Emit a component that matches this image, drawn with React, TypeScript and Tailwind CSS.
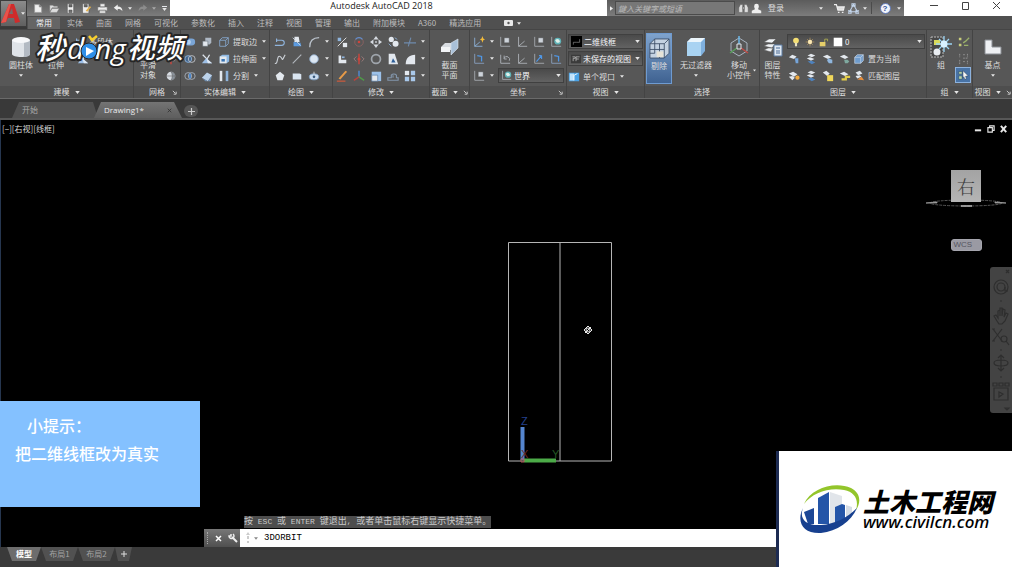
import { useState } from "react";
import type { ReactNode } from "react";

const BLUE = "#8fb4dc";
const PALE = "#e3e8ee";
const GRAY = "#a9adb3";

/** Small ribbon glyphs, all drawn on a 14x14 grid. */
const glyphs = {
  newFile: <path d="M2 2h6l3 3v7H2zM8 2v3h3" fill="#eee" stroke="#999" />,
  open: <path d="M1 11V3h4l1 1h5v2H4zM4 7h9l-3 5H1z" fill="#ddd" stroke="#777" strokeWidth=".5" />,
  save: <path d="M3 1h8v12H3zM5 2v3h4V2zM5 9v3h4V9z" fill="#eee" fillRule="evenodd" stroke="#444" strokeWidth=".6" />,
  saveAs: (
    <>
      <path d="M2 1h8v12H2zM4 2v3h4V2z" fill="#eee" fillRule="evenodd" stroke="#444" strokeWidth=".6" />
      <path d="M6 10l5-6 2 1-5 6z" fill="#e2b04d" />
    </>
  ),
  print: <path d="M4 1h6v4H4zM1 5h12v5H1zM3 9h8v4H3z" fill="#eee" stroke="#666" strokeWidth=".7" />,
  undo: <path d="M1 6l5-4v2.5c4 0 6 2 6 6-1.500-2.500-3-3-6-3V10z" fill="#eee" />,
  redo: <path d="M13 6L8 2v2.500c-4 0-6 2-6 6 1.500-2.500 3-3 6-3V10z" fill="#8c8c8c" />,
  sphere: (
    <>
      <circle cx="7" cy="7" r="5" fill="#d6dbe1" />
      <path d="M7 2a5 5 0 010 10c2-3 2-7 0-10zM2 7h10" fill="#8c949d" stroke="#666" strokeWidth=".7" />
    </>
  ),
  union: (
    <>
      <rect x="1" y="3" width="12" height="8" rx="4" fill="#7aa5d6" />
      <circle cx="5" cy="7" r="3" fill="#b4d0ee" />
    </>
  ),
  subtract: (
    <g fill="none" stroke={BLUE}>
      <circle cx="5" cy="7" r="4" fill="#46688e" />
      <circle cx="9" cy="7" r="4" stroke="#c2c6cc" />
    </g>
  ),
  intersect: (
    <g fill="none" stroke="#aab2bd">
      <circle cx="5" cy="7" r="4" />
      <circle cx="9" cy="7" r="4" />
      <path d="M7 4v6" stroke="#4a8fdc" strokeWidth="2" />
    </g>
  ),
  thicken: (
    <>
      <path d="M5 2h7v6l-2 2H5z" fill="#aeb8c4" />
      <path d="M2 6h6v6H2z" fill={PALE} stroke="#5d6670" strokeWidth=".6" />
    </>
  ),
  slice: (
    <>
      <path d="M2 2l6 6M10 2L7 7" stroke="#dde3ea" strokeWidth="1.500" />
      <path d="M1 12l5-6 7 6z" fill="#9dbfe6" />
      <path d="M6 6l7 6H8z" fill="#dfe9f4" />
    </>
  ),
  interfere: (
    <>
      <path d="M1 9l6-6 6 3-5 7z" fill="#bcd2ea" />
      <path d="M1 9l7 4 5-7-2 7H5z" fill="#6f8fb3" />
    </>
  ),
  extractEdge: (
    <g fill="none" stroke="#86a9cf">
      <path d="M2 5h7v7H2zM5 2h7v7" />
      <path d="M2 5l3-3M9 5l3-3M9 12l3-3" />
    </g>
  ),
  extrudeFace: (
    <>
      <path d="M2 4l3-2h8v8l-3 2H2z" fill="#8fb9e4" />
      <path d="M2 4h8v8H2z" fill={PALE} />
      <path d="M4 7h4v3H4z" fill="#3a76b5" />
    </>
  ),
  split: (
    <>
      <path d="M2 1h3v12H2z" fill={PALE} />
      <path d="M9 1h3v12H9z" fill={BLUE} />
    </>
  ),
  polyline: <path d="M1 11h8a3 3 0 000-6H3M3 3v4" fill="none" stroke={BLUE} strokeWidth="1.300" />,
  helix: (
    <>
      <path d="M4 1h5l1 6H4z" fill={PALE} />
      <path d="M3 7l8 1 1 4H3z" fill="#5c9be0" />
      <path d="M2 2l9 9" stroke="#cfd8e2" />
    </>
  ),
  arc: <path d="M2 13C2 6 6 2 13 2" fill="none" stroke="#b9c1ca" strokeWidth="1.500" />,
  spline: <path d="M1 12C5 14 3 2 7 4s1 8 6-2" fill="none" stroke="#ccd1d7" strokeWidth="1.300" />,
  line: <path d="M2 12L12 2" stroke="#b2b7bd" strokeWidth="1.300" />,
  circle: <circle cx="7" cy="7" r="5" fill="#dce7f3" stroke="#8da9c8" />,
  polygon: <path d="M7 2l5 4-2 6H4L2 6z" fill={PALE} />,
  rect: <path d="M2 4h8l2 1v6H2z" fill="#d9e4f0" />,
  ellipse: (
    <>
      <ellipse cx="7" cy="8" rx="5.500" ry="3.500" fill="#c9dcf0" stroke="#7d9dc0" />
      <circle cx="7" cy="8" r="1.500" fill="#39597c" />
      <path d="M7 2v3" stroke="#ddd" />
    </>
  ),
  move3: (
    <>
      <path d="M2 2h4v4H2z" fill={BLUE} />
      <path d="M2 12L12 2" stroke="#eee" />
      <path d="M8 8h5v5H8z" fill={PALE} />
    </>
  ),
  rotate3: (
    <g fill="none">
      <circle cx="7" cy="7" r="5" stroke="#8f6262" />
      <path d="M3 4a5 5 0 018 0" stroke="#5f8fd0" strokeWidth="1.400" />
      <circle cx="7" cy="7" r="1.500" fill="#d0453c" />
    </g>
  ),
  move: <path d="M7 0l3 4H4zM7 14l3-4H4zM0 7l4-3v6zM14 7l-4-3v6zM6 6h2v2H6z" fill="#d5dae0" />,
  copy: (
    <>
      <circle cx="5" cy="4" r="3" fill={PALE} />
      <circle cx="10" cy="9" r="3.500" fill={PALE} />
      <path d="M2 9l3 3M9 2l3 2" stroke={BLUE} />
    </>
  ),
  trim: <path d="M0 8h14M8 2L5 12" stroke="#6f8bad" strokeWidth="1.300" />,
  align: (
    <>
      <path d="M3 3h3v5h6v4H3z" fill={PALE} />
      <path d="M7 4h3v2H7z" fill={BLUE} />
    </>
  ),
  mirror3: (
    <>
      <path d="M7 1v12" stroke="#d0453c" strokeWidth="1.600" />
      <path d="M4 4L1 7l3 3M10 4l3 3-3 3" fill="none" stroke="#a08080" />
      <circle cx="7" cy="7" r="1.800" fill="#d0453c" />
    </>
  ),
  rotate: <circle cx="7" cy="7" r="5.200" fill="none" stroke="#9fa5ac" strokeWidth="2" />,
  mirror: (
    <>
      <path d="M2 1h7l4 12H2z" fill={PALE} />
      <path d="M5 11l2-5 3 5z" fill="#2e5f99" />
    </>
  ),
  fillet: <path d="M2 13C2 6 6 2 13 2v11z" fill={PALE} />,
  erase: (
    <>
      <path d="M3 10L11 1l2 1-8 9z" fill="#e79b48" />
      <path d="M1 13h10" stroke="#cf5b3c" strokeWidth="1.400" />
    </>
  ),
  axes: (
    <g strokeWidth="1.800" fill="none">
      <path d="M7 8V1" stroke="#4f86cc" />
      <path d="M7 8l-6 4" stroke="#b8443d" />
      <path d="M7 8l6 4" stroke="#4f9a48" />
    </g>
  ),
  scale: (
    <>
      <path d="M2 2h11v11H2z" fill="#9cc1e9" />
      <path d="M2 6h7v7H2z" fill={PALE} stroke="#4a6f98" strokeWidth=".7" />
    </>
  ),
  offset: <path d="M1 12h12V9h-2V6a4 4 0 00-6 0v3H1zM7 9V6" fill="none" stroke="#8397ad" strokeWidth="1.300" />,
  array: (
    <g fill="#a9c8ea">
      <path d="M1 1h5v5H1z" fill={PALE} />
      <path d="M8 1h5v5H8zM1 8h5v5H1zM8 8h5v5H8z" />
    </g>
  ),
  ucs: <path d="M3 1v11h10M3 12l7-6" fill="none" stroke={GRAY} strokeWidth="1.100" />,
  ucsStar: (
    <>
      <path d="M2 2v10h9M2 12l6-5" fill="none" stroke={BLUE} />
      <path d="M11 0l1 3 2 1-2 1-1 3-1-3-2-1 2-1z" fill="#f3bb3a" />
    </>
  ),
  ucsBox: (
    <>
      <path d="M2 1v11h11" fill="none" stroke={GRAY} />
      <path d="M6 2h6v6H6z" fill="#cdd3da" stroke="#444" strokeWidth=".6" />
    </>
  ),
  ucsWorld: (
    <>
      <path d="M2 1v11h11" fill="none" stroke={GRAY} />
      <circle cx="9" cy="6" r="4" fill="#5fb3b8" />
      <path d="M6 5q3-3 5 0t-3 3z" fill="#dff0ea" />
    </>
  ),
  ucsUndo: <path d="M2 2v10h11M6 6a3 3 0 016 3M6 3v4h3" fill="none" stroke="#b2b7bd" />,
  ucsArrow: (
    <>
      <path d="M2 1v11h11" fill="none" stroke={GRAY} />
      <path d="M4 10l6-7m0 0v4m0-4H7" fill="none" stroke="#4f97e6" strokeWidth="1.300" />
    </>
  ),
  ucsBlue: (
    <>
      <path d="M2 1v11h11" fill="none" stroke="#8ba4c2" />
      <path d="M5 3l5 1v6" fill="none" stroke="#4f97e6" strokeWidth="1.500" />
    </>
  ),
  wireframe: (
    <>
      <path d="M0 0h14v14H0z" fill="#000" />
      <path d="M3 11V8h4M7 8h4V4" fill="none" stroke="#999" strokeWidth=".8" />
    </>
  ),
  savedView: (
    <>
      <path d="M0 1h14v12H0z" fill="#3b3b3b" />
      <path d="M2 4h4v2H3v4M7 10V4h5M7 7h4" fill="none" stroke="#c9c9c9" />
    </>
  ),
  viewport: (
    <>
      <path d="M1 2h12v10H1z" fill="#4ba3e6" />
      <path d="M2 3h5v8H2z" fill="#bfe2fb" />
      <path d="M7 11V5l4-2" stroke="#fff" fill="none" />
    </>
  ),
  bulb: (
    <>
      <circle cx="7" cy="5" r="4" fill="#f5df72" />
      <path d="M5.500 8h3v5h-3z" fill="#e7e2c0" />
    </>
  ),
  sun: (
    <>
      <path d="M7 1v12M1 7h12M3 3l8 8M11 3l-8 8" stroke="#b99a5f" />
      <circle cx="7" cy="7" r="3" fill="#fbe9b5" />
    </>
  ),
  lock: (
    <>
      <path d="M1 7h8v6H1z" fill="#e6cf6a" />
      <path d="M8 7V3h4v3" fill="none" stroke="#aeb04f" strokeWidth="1.200" />
    </>
  ),
  swatch: <path d="M1 1h12v12H1z" fill="#fff" />,
  layerPlain: (
    <>
      <path d="M1 5l4-3 5 2-3 3z" fill={PALE} />
      <path d="M8 6h4v6H9z" fill="#76a5da" />
    </>
  ),
  layerStack: (
    <>
      <path d="M3 3l4-2 5 2-4 2zM2 6l4-1 5 2-4 2z" fill={PALE} />
      <path d="M3 10l5-1 4 2-4 2z" fill="#4e82bd" />
    </>
  ),
  layerFreeze: (
    <>
      <path d="M1 4l5-2 5 3-4 2z" fill={PALE} />
      <path d="M7 6l5 2v4H8l-2-3z" fill="#8fb6de" />
    </>
  ),
  layerKey: (
    <>
      <path d="M1 4l5-2 5 3-4 2z" fill={PALE} />
      <path d="M6 8h4l2 2-2 2H7z" fill="#7fa9a0" />
    </>
  ),
  layerCube: <path d="M2 5l3-3h7v7l-3 3H2zM2 5h7v7M9 5l3-3" fill="#6f9ccd" stroke="#c9d8e8" strokeWidth=".8" />,
  layerOn: (
    <>
      <path d="M1 4l5-2 5 3-4 3zM1 8l4-1 3 2-3 3z" fill={PALE} />
      <circle cx="11" cy="9" r="2.500" fill="#f0a93f" />
    </>
  ),
  layerSun: (
    <>
      <path d="M1 3l4-2 4 3-3 3z" fill={PALE} />
      <path d="M6 6h7v7H6z" fill="#f0d75b" />
    </>
  ),
  layerUnlock: (
    <>
      <path d="M1 4l5-2 5 3-4 2z" fill={PALE} />
      <path d="M3 11h5V8h5" stroke="#e3cd4a" strokeWidth="2.500" fill="none" />
    </>
  ),
  layerWarm: (
    <>
      <path d="M3 3l5-2 3 3-5 2zM3 7l5-1 2 2-5 2z" fill={PALE} />
      <path d="M5 11l5-3 3 4z" fill="#e98f3c" />
    </>
  ),
  ungroup: (
    <>
      <path d="M1 2h3v3H1zM1 9h3v3H1z" fill="#c8cc7b" />
      <path d="M6 8l3-2 4-4M7 11h5" stroke="#9ab06a" fill="none" strokeWidth="1.500" />
    </>
  ),
  groupEdit: <path d="M2 1v4M2 8v5M6 2h3M11 1v4M6 10h3M11 9v4M6 6h6" stroke="#9a9a9a" strokeDasharray="2 1" />,
  groupPick: (
    <>
      <path d="M2 3h4v3H2zM2 8h4v4H2z" fill="#b7d4a8" stroke="#1c3d66" strokeWidth=".6" />
      <path d="M7 2l6 6-3 .5 1 3-2 .5-1-3-1 1z" fill="#f5f5f5" stroke="#234" strokeWidth=".5" />
    </>
  ),
  binoculars: <path d="M1 12V6l2-4h3v10zM13 12V6l-2-4H8v10zM6 5h2v3H6z" fill="#ddd" stroke="#555" strokeWidth=".6" />,
  person: <path d="M7 1a3 3 0 013 3c0 2-1 3-1 4l4 2v3H1v-3l4-2c0-1-1-2-1-4a3 3 0 013-3z" fill="#eee" />,
  cart: <path d="M0 2h3l1 3h9l-1 4H5L3 2M5 12h2M10 12h2" fill="#ddd" stroke="#eee" strokeWidth="1.500" />,
  exchange: <path d="M7 2L2 11h10zM5 1h4v3H5zM0 10h4v3H0zM10 10h4v3h-4z" fill="none" stroke="#c2d4ea" strokeWidth="1.300" />,
};

type GlyphName = keyof typeof glyphs;

function Glyph({ name, className = "size-3" }: { name: GlyphName; className?: string }) {
  return (
    <svg viewBox="0 0 14 14" fill="none" aria-hidden="true" className={`shrink-0 ${className}`}>
      {glyphs[name]}
    </svg>
  );
}

function Caret({ className = "w-[5px]" }: { className?: string }) {
  return (
    <svg viewBox="0 0 6 4" aria-hidden="true" className={`h-[3px] shrink-0 ${className}`}>
      <path d="M0 0h6L3 4z" fill="#e6e6e6" />
    </svg>
  );
}

function Launcher() {
  return (
    <svg viewBox="0 0 6 6" aria-hidden="true" className="size-[5px] shrink-0">
      <path d="M1 1l3 3M5 2v3H2" stroke="#ddd" fill="none" />
    </svg>
  );
}

function ToolButton({ name }: { name: GlyphName }) {
  return (
    <button type="button" aria-label={name} className="flex h-[17px] w-[17px] shrink-0 items-center justify-center">
      <Glyph name={name} />
    </button>
  );
}

function MoreButton() {
  return (
    <button type="button" aria-label="更多" className="flex h-[17px] w-[9px] shrink-0 items-center justify-center">
      <Caret className="w-1" />
    </button>
  );
}

/** One line of icon buttons; "more" puts a flyout arrow in the line. */
function ToolRow({ items, children }: { items: (GlyphName | "more")[]; children?: ReactNode }) {
  return (
    <div className="flex h-[17px] items-center">
      {items.map((item, i) => (item === "more" ? <MoreButton key={i} /> : <ToolButton key={i} name={item} />))}
      {children}
    </div>
  );
}

function LabelButton({ icon, label, more }: { icon: GlyphName; label: string; more?: boolean }) {
  return (
    <button type="button" className="flex h-[17px] items-center gap-[3px] whitespace-nowrap">
      <Glyph name={icon} />
      {label}
      {more && <Caret className="ml-0.5 w-1" />}
    </button>
  );
}

function BigButton({ lines, more, className = "", children }: { lines: string[]; more?: boolean; className?: string; children: ReactNode }) {
  return (
    <button type="button" className={`flex h-[51px] shrink-0 flex-col items-center pt-px leading-[10px] ${className}`}>
      <span className="flex h-[26px] items-center">{children}</span>
      {lines.map((line) => (
        <span key={line} className="whitespace-nowrap">{line}</span>
      ))}
      {more && <Caret className="mt-1 w-1" />}
    </button>
  );
}

function Combo({ label, icon, options, className = "" }: { label: string; icon?: ReactNode; options: string[]; className?: string }) {
  return (
    <div className={`relative flex h-[15px] items-center gap-0.5 border border-[#404040] bg-gradient-to-b from-[#4a4a4a] to-[#626262] pl-0.5 ${className}`}>
      {icon}
      <select aria-label={label} className="h-full min-w-0 flex-1 appearance-none bg-transparent p-0 text-[8px] text-gray-100 outline-none">
        {options.map((o) => (
          <option key={o}>{o}</option>
        ))}
      </select>
      <Caret className="pointer-events-none absolute top-[5px] right-[2px] w-[5px]" />
    </div>
  );
}

function Panel({ title, width, more, launcher, children }: { title: string; width: string; more?: boolean; launcher?: boolean; children: ReactNode }) {
  return (
    <section className={`relative flex shrink-0 flex-col border-r border-[#444] ${width}`}>
      <div className="flex h-[57px] pt-[3px]">{children}</div>
      <h2 className="flex h-3 items-center justify-center gap-[5px] bg-[#4e4e4e] font-normal whitespace-nowrap">
        {title}
        {more && <Caret />}
        {launcher && (
          <button type="button" aria-label={`${title}设置`} className={more ? "" : "absolute right-[3px]"}>
            <Launcher />
          </button>
        )}
      </h2>
    </section>
  );
}

const MENU = ["常用", "实体", "曲面", "网格", "可视化", "参数化", "插入", "注释", "视图", "管理", "输出", "附加模块", "A360", "精选应用"];

function TitleBar() {
  return (
    <div className="flex h-4 bg-gradient-to-b from-[#5c5c5c] to-[#7c7c7c]">
      <div className="flex w-[143px] items-center pl-[3px]">
        {(["newFile", "open", "save", "saveAs", "print", "undo"] as GlyphName[]).map((n) => (
          <button key={n} type="button" aria-label={n} className="flex w-4 justify-center">
            <Glyph name={n} className="size-[11px]" />
          </button>
        ))}
        <span className="flex w-2 justify-center"><Caret className="w-1" /></span>
        <button type="button" aria-label="redo" className="flex w-4 justify-center">
          <Glyph name="redo" className="size-[11px]" />
        </button>
        <span className="flex w-2 justify-center"><Caret className="w-1 opacity-50" /></span>
        <button type="button" aria-label="自定义" className="flex w-3 flex-col items-center gap-px">
          <span className="h-px w-[5px] bg-gray-200" />
          <Caret />
        </button>
      </div>
      <h1 className="flex-1 bg-white pr-3.5 text-center font-['Open_Sans','Noto_Sans',sans-serif] text-[9px] leading-[12px] text-[#222]">
        Autodesk AutoCAD 2018
      </h1>
      <div className="flex w-[297px] items-center">
        <span className="flex w-2 justify-center">
          <svg viewBox="0 0 4 6" className="h-[5px] w-[3px]"><path d="M0 0l4 3-4 3z" fill="#eee" /></svg>
        </span>
        <input
          type="search"
          aria-label="搜索"
          placeholder="鍵入关键字或短语"
          className="h-[14px] w-[120px] border border-[#4b4b4b] bg-[#777] px-0.5 text-[8px] italic outline-none placeholder:text-[#b9b9b9]"
        />
        <button type="button" aria-label="搜索" className="flex w-4 justify-center"><Glyph name="binoculars" className="size-[11px]" /></button>
        <button type="button" className="flex items-center gap-0.5 whitespace-nowrap">
          <Glyph name="person" className="size-[11px]" />
          <span className="pl-1">登录</span>
        </button>
        <span className="flex flex-1 justify-end pr-2"><Caret className="w-1" /></span>
        <button type="button" aria-label="商店" className="flex w-4 justify-center"><Glyph name="cart" className="size-[11px]" /></button>
        <button type="button" aria-label="应用程序" className="flex w-6 items-center gap-1 pl-px"><Glyph name="exchange" className="size-[11px]" /><Caret className="w-1" /></button>
        <span className="h-3 w-px bg-[#4b4b4b]" />
        <button type="button" aria-label="帮助" className="flex w-8 items-center justify-center gap-1.5 pl-1">
          <span className="flex size-[11px] items-center justify-center rounded-full border border-[#5d76b5] bg-[#f1f4fa] font-['Liberation_Sans',sans-serif] leading-[9px] font-bold text-[#2f4f9c]">
            ?
          </span>
          <Caret className="w-1" />
        </button>
      </div>
      <div className="flex w-[108px] items-start justify-end bg-white pt-px">
        {["M0 4.500h8", "M1.500 1.500h6v7h-6z", "M1 1l7 7M8 1L1 8"].map((d, i) => (
          <button key={d} type="button" aria-label={["最小化", "最大化", "关闭"][i]} className="flex w-[31px] justify-center">
            <svg viewBox="0 0 9 9" className="size-[9px]" fill="none"><path d={d} stroke="#444" /></svg>
          </button>
        ))}
      </div>
    </div>
  );
}

function MenuTabs() {
  const [active, setActive] = useState("常用");
  return (
    <nav className="flex h-[13px] items-end gap-px bg-[#505050] pl-px">
      {MENU.map((item) => (
        <button
          key={item}
          type="button"
          onClick={() => setActive(item)}
          className={
            item === active
              ? "h-3 bg-[#656565] px-2 leading-3 whitespace-nowrap text-gray-100"
              : "h-3 px-1.5 leading-3 whitespace-nowrap text-[#bdbdbd]"
          }
        >
          {item}
        </button>
      ))}
      <button type="button" aria-label="显示选项" className="ml-4 flex h-3 items-center gap-1">
        <svg viewBox="0 0 9 6" className="h-1.5 w-[9px]">
          <rect width="9" height="6" rx="1" fill="#e8e8e8" />
          <circle cx="4.500" cy="3" r="1.200" fill="#555" />
        </svg>
        <Caret className="w-1" />
      </button>
    </nav>
  );
}

function Ribbon() {
  return (
    <div className="flex h-[70px] overflow-hidden border-y border-[#454545] border-b-[#6a6a6a] bg-[#575757] text-[#dedede]">
      <Panel title="建模" width="w-[134px]" more>
        <BigButton lines={["圆柱体"]} more className="ml-1 w-[34px]">
          <svg viewBox="0 0 20 22" className="h-[22px] w-5">
            <path d="M1 4v14c0 4 18 4 18 0V4z" fill="#dfe3e8" />
            <path d="M13 5v16c3 0 6-1 6-3V4z" fill="#b3bac3" />
            <ellipse cx="10" cy="4" rx="9" ry="3" fill="#f7f8fa" />
          </svg>
        </BigButton>
        <BigButton lines={["拉伸"]} more className="w-9">
          <svg viewBox="0 0 20 20" className="size-5"><path d="M3 8l8-4 6 3v9l-8 3-6-3z" fill="#cfd8e2" /></svg>
        </BigButton>
        <div className="flex flex-col">
          <LabelButton icon="polyline" label="多段体" />
          <ToolRow items={["slice"]} />
        </div>
      </Panel>
      <Panel title="网格" width="w-[47px]" launcher>
        <BigButton lines={["平滑", "对象"]} className="w-7">
          <svg viewBox="0 0 20 20" className="size-5"><circle cx="10" cy="10" r="7" fill="#cfd8e2" /></svg>
        </BigButton>
        <div className="flex flex-col">
          <ToolRow items={["sphere"]} />
          <ToolRow items={["mirror3"]} />
          <ToolRow items={["sphere"]} />
        </div>
      </Panel>
      <Panel title="实体编辑" width="w-[89px]" more>
        <div className="flex flex-col">
          <ToolRow items={["union", "thicken"]} />
          <ToolRow items={["subtract", "slice"]} />
          <ToolRow items={["intersect", "interfere"]} />
        </div>
        <div className="flex flex-col items-start pl-[3px]">
          <LabelButton icon="extractEdge" label="提取边" more />
          <LabelButton icon="extrudeFace" label="拉伸面" more />
          <LabelButton icon="split" label="分割" more />
        </div>
      </Panel>
      <Panel title="绘图" width="w-[63px]" more>
        <div className="flex flex-col pl-px">
          <ToolRow items={["polyline", "helix", "arc", "more"]} />
          <ToolRow items={["spline", "line", "circle", "more"]} />
          <ToolRow items={["polygon", "rect", "ellipse", "more"]} />
        </div>
      </Panel>
      <Panel title="修改" width="w-[97px]" more>
        <div className="flex flex-col">
          <ToolRow items={["move3", "rotate3", "move", "copy", "trim", "more"]} />
          <ToolRow items={["align", "mirror3", "rotate", "mirror", "fillet", "more"]} />
          <ToolRow items={["erase", "axes", "scale", "offset", "array", "more"]} />
        </div>
      </Panel>
      <Panel title="截面" width="w-10" more launcher>
        <BigButton lines={["截面", "平面"]} className="w-full">
          <svg viewBox="0 0 20 20" className="size-5">
            <path d="M1 10l4-4h9v7H1z" fill="#d8dce1" />
            <path d="M1 10h9v5H1z" fill="#f2f4f6" />
            <path d="M11 6l7-4v9l-7 7z" fill="#a9c0d8" stroke="#dfe8f1" strokeWidth=".6" />
          </svg>
        </BigButton>
      </Panel>
      <Panel title="坐标" width="w-[97px]" launcher>
        <div className="flex flex-col">
          <ToolRow items={["ucsStar", "more", "ucsBox", "ucs", "ucsBox", "ucsWorld"]} />
          <ToolRow items={["ucsBlue", "more", "ucsUndo", "ucs", "ucsArrow", "ucsBlue"]} />
          <ToolRow items={["ucsBox", "more"]}>
            <Combo label="坐标系" options={["世界"]} icon={<Glyph name="ucsWorld" className="size-[11px]" />} className="ml-0.5 w-[66px]" />
          </ToolRow>
        </div>
      </Panel>
      <Panel title="视图" width="w-[78px]" more>
        <div className="flex flex-1 flex-col gap-0.5 px-px pt-px">
          <Combo label="视觉样式" options={["二维线框", "真实", "概念"]} icon={<Glyph name="wireframe" className="size-[11px]" />} />
          <Combo label="视图" options={["未保存的视图"]} icon={<Glyph name="savedView" className="size-[10px]" />} />
          <LabelButton icon="viewport" label="单个视口" more />
        </div>
      </Panel>
      <Panel title="选择" width="w-[115px]">
        <BigButton lines={["剔除"]} className="ml-px w-[26px] border border-[#6f9bd0] bg-gradient-to-b from-[#7fa3cd] to-[#3f6291]">
          <svg viewBox="0 0 22 22" className="size-[21px]">
            <path d="M1 6l5-5h15v15l-5 5H1z" fill="#c4d2e2" />
            <path d="M1 6h15v15H1zM1 6l5-5h15M16 6l5-5v15l-5 5M6 1v15M11 6v15M6 16H1M1 12h15" stroke="#3a4c66" fill="none" strokeWidth=".9" />
            <path d="M8 14h7v6H8z" fill="#e6e3d8" />
          </svg>
        </BigButton>
        <BigButton lines={["无过滤器"]} more className="w-12">
          <svg viewBox="0 0 20 20" className="size-5">
            <path d="M1 5l4-4h14v13l-4 5H1z" fill="#7fb0de" />
            <path d="M1 5h14v14H1z" fill="#a9d3f2" />
            <path d="M1 5l4-4h14l-4 4z" fill="#ecf6fc" />
          </svg>
        </BigButton>
        <BigButton lines={["移动", "小控件"]} className="relative w-[38px]">
          <svg viewBox="0 0 20 22" className="h-[22px] w-5" fill="none">
            <path d="M10 2l8 5v8l-8 5-8-5V7z" stroke="#a8b3c0" />
            <path d="M10 0v8" stroke="#6bb7e8" strokeWidth="1.500" />
            <path d="M8 12l-7 5" stroke="#57a05a" strokeWidth="1.500" />
            <path d="M12 12l7 5" stroke="#c24b45" strokeWidth="1.500" />
            <path d="M8 8h4v5H8z" stroke="#e0e4ea" />
          </svg>
          <Caret className="absolute right-0.5 bottom-3 w-[3px]" />
        </BigButton>
      </Panel>
      <Panel title="图层" width="w-[167px]" more>
        <BigButton lines={["图层", "特性"]} className="w-[25px]">
          <svg viewBox="0 0 20 20" className="size-5">
            <path d="M1 5l5-3h7l-4 4zM1 9l4-2h7l-3 4zM1 13l4-2h5l-2 4z" fill="#eef1f4" stroke="#555" strokeWidth=".5" />
            <path d="M11 8h8v11h-8z" fill="#dfe8f2" stroke="#5c7da3" />
            <path d="M13 11h4M13 14h4M13 16h4" stroke="#4a6b94" />
          </svg>
        </BigButton>
        <div className="flex flex-1 flex-col">
          <Combo
            label="图层"
            options={["0"]}
            className="my-px ml-0.5 w-[138px]"
            icon={
              <span className="flex items-center gap-1 pl-px">
                <Glyph name="bulb" className="size-[10px]" />
                <Glyph name="sun" className="size-[10px]" />
                <Glyph name="lock" className="size-[10px]" />
                <Glyph name="swatch" className="size-[10px]" />
              </span>
            }
          />
          <ToolRow items={["layerPlain", "layerStack", "layerFreeze", "layerKey"]}>
            <LabelButton icon="layerCube" label="置为当前" />
          </ToolRow>
          <ToolRow items={["layerOn", "layerStack", "layerSun", "layerUnlock"]}>
            <LabelButton icon="layerWarm" label="匹配图层" />
          </ToolRow>
        </div>
      </Panel>
      <Panel title="组" width="w-[46px]" more>
        <BigButton lines={["组"]} className="w-7">
          <svg viewBox="0 0 22 22" className="size-[22px]">
            <path d="M1 1h12v20H1z" fill="#474747" stroke="#bbb" strokeDasharray="2 1" />
            <path d="M4 4h6v5H4z" fill="#d8da5a" />
            <circle cx="7" cy="16" r="3.500" fill="#e9edf1" />
            <path d="M14 0v16M6 8h16M9 3l10 10M19 3L9 13" stroke="#9ad4f5" strokeWidth="1.300" />
            <circle cx="14" cy="8" r="3.500" fill="#d9f1ff" />
          </svg>
        </BigButton>
        <div className="flex flex-col">
          <ToolRow items={["ungroup"]} />
          <ToolRow items={["groupEdit"]} />
          <button type="button" aria-label="组选择" className="flex h-4 w-4 items-center justify-center border border-[#8db2dd] bg-[#4873a6]">
            <Glyph name="groupPick" />
          </button>
        </div>
      </Panel>
      <section className="flex min-w-9 flex-1 flex-col">
        <div className="flex h-[57px] justify-center pt-[3px]">
          <BigButton lines={["基点"]} more className="w-9">
            <svg viewBox="0 0 18 16" className="h-4 w-[18px]">
              <path d="M1 1h7v7h9v7H1z" fill="#eef0f3" stroke="#8b8f95" />
            </svg>
          </BigButton>
        </div>
        <h2 className="flex h-3 items-center justify-center gap-[5px] bg-[#4e4e4e] font-normal whitespace-nowrap">
          视图 <Caret /> <Launcher />
        </h2>
      </section>
    </div>
  );
}

function DrawingTabs() {
  return (
    <div className="flex h-[21px] items-end border-b-2 border-[#575757] bg-[#393939] pl-3">
      <button type="button" className="h-4 w-[86px] bg-[#515151] pl-2.5 text-left text-[#a9a9a9] [clip-path:polygon(7px_0,81px_0,100%_100%,0_100%)]">
        开始
      </button>
      <button type="button" className="-ml-1 flex h-4 w-[88px] items-center justify-between bg-gradient-to-b from-[#747474] to-[#5e5e5e] px-2.5 font-['Open_Sans','Noto_Sans',sans-serif] text-[8px] text-[#ececec] [clip-path:polygon(7px_0,80px_0,100%_100%,0_100%)]">
        Drawing1*
        <svg viewBox="0 0 7 7" className="size-[5px]"><path d="M1 1l5 5M6 1L1 6" stroke="#333" strokeWidth="1.200" /></svg>
      </button>
      <button type="button" aria-label="新图形" className="mb-px ml-0.5 flex h-3 w-3.5 items-center justify-center rounded-md bg-[#555]">
        <svg viewBox="0 0 7 7" className="size-[7px]"><path d="M3.500 0v7M0 3.500h7" stroke="#ccc" strokeWidth="1.200" /></svg>
      </button>
    </div>
  );
}

/** Wireframe model with the UCS icon at its foot and the orbit cursor. */
function Model() {
  return (
    <svg className="absolute inset-0 size-full" fill="none" aria-label="模型">
      <path d="M508.500 122.500h103v218.500h-103zM560 122.500v218.500" stroke="#b5b5b5" />
      <path d="M522.500 307v33" stroke="#5585cf" strokeWidth="4" />
      <path d="M524 340.500h32" stroke="#4cab48" strokeWidth="4" />
      <path d="M521 339h3v3h-3z" stroke="#b05a5a" />
      <g fontFamily="Liberation Sans" fontSize="11">
        <text x="521" y="305" fill="#24408e">Z</text>
        <text x="552" y="338" fill="#235723">Y</text>
        <text x="521" y="338" fill="#6e2a2a">X</text>
      </g>
      <g stroke="#e8e8e8">
        <circle cx="588" cy="210" r="2" />
        <path d="M588 206l4 4-4 4-4-4zM585 213l6-6" />
      </g>
    </svg>
  );
}

function ViewCube() {
  return (
    <div className="absolute top-[50px] right-[5px] flex w-[82px] flex-col items-center">
      <button type="button" className="z-10 h-8 w-[30px] bg-gradient-to-b from-[#a3a3a3] to-[#b5b5b5] font-['Noto_Serif_CJK_SC','Noto_Sans_CJK_SC',serif] text-[18px] leading-8 font-light text-[#3b3b3b]">
        右
      </button>
      <svg viewBox="0 0 82 10" className="-mt-1 h-2.5 w-full" fill="none">
        <ellipse cx="41" cy="5" rx="36" ry="3" stroke="#555" strokeDasharray="3 1" />
        <path d="M1 5l11-1v1zM81 5l-11-1v1z" fill="#bbb" stroke="#999" strokeWidth=".8" />
        <path d="M36 8h11" stroke="#bbb" strokeWidth="1.500" />
      </svg>
      <button type="button" className="mt-[31px] h-3 w-[31px] rounded-[3px] border border-[#a5a5ad] bg-[#9a9aa3] px-0.5 text-left font-['Liberation_Sans',sans-serif] text-[8px] leading-[10px] text-[#55555f]">
        WCS
      </button>
    </div>
  );
}

function NavBar() {
  return (
    <div className="absolute top-[147px] right-0 h-[146px] w-[22px] rounded-l-[3px] bg-[#434343]">
      <svg viewBox="0 0 22 146" className="h-full w-full" fill="none" stroke="#2e2e2e" strokeWidth="1.200">
        <path d="M16 3l3 3M19 3l-3 3" />
        <circle cx="11" cy="20" r="7" />
        <circle cx="11" cy="20" r="4" />
        <path d="M15 20v4h3M10 34h2M10 83h2M10 110h2" />
        <path d="M7 54l-3-5 2-1 2 3v-7l2-1v6-8h2v8l1-7 2 1-1 7 2-4 2 1-3 7-3 3H9z" />
        <path d="M3 62l9 12M3 74l9-12M2 62h3M2 74h3" />
        <circle cx="14" cy="72" r="3" />
        <path d="M16 74l3 4M11 88v16M8 91l3-3 3 3M8 101l3 3 3-3M4 96c0-4 14-4 14 0s-14 4-14 0" />
        <path d="M4 121h14v12H4zM3 116h4v3H3zM9 116h4v3H9zM15 116h4v3h-4zM9 125v5l4-3z" />
        <path d="M15 141h4l-2 2z" />
      </svg>
    </div>
  );
}

function CommandLine() {
  return (
    <div className="absolute right-[236px] bottom-0 left-[204px]">
      <p className="mb-px ml-10 w-fit bg-[#4d4d4d] font-['Liberation_Mono','Noto_Sans_CJK_SC',monospace] text-[8px] leading-[11px] whitespace-nowrap text-[#c9c9c9]">
        <span className="text-[9px]">按</span> ESC <span className="text-[9px]">或</span> ENTER{" "}
        <span className="text-[9px]">键退出</span>, <span className="text-[9px]">或者单击鼠标右键显示快捷菜单。</span>
      </p>
      <div className="flex h-[18px] bg-white">
        <div className="flex w-9 items-center justify-between bg-gradient-to-b from-[#777] to-[#505050] pr-0.5 pl-[3px]">
          <span className="h-3 w-px border-l border-dotted border-[#aaa]" />
          <button type="button" aria-label="关闭">
            <svg viewBox="0 0 7 7" className="size-[7px]"><path d="M1 1l5 5M6 1L1 6" stroke="#fff" strokeWidth="1.500" /></svg>
          </button>
          <button type="button" aria-label="自定义">
            <svg viewBox="0 0 10 10" className="size-2.5" fill="none"><path d="M4 4l5 5" stroke="#eee" strokeWidth="2" /><path d="M3 1v2H1a2.500 2.500 0 104-2" stroke="#eee" strokeWidth="1.500" /></svg>
          </button>
        </div>
        <div className="flex items-center gap-1 px-1.5">
          <svg viewBox="0 0 4 12" className="h-3 w-1"><path d="M0 3l2-3 2 3zM1 4h2v3H1zM1 9h2v2H1z" fill="#ccc" /></svg>
          <svg viewBox="0 0 5 3" className="h-[3px] w-1"><path d="M0 0h5L2.500 3z" fill="#888" /></svg>
        </div>
        <input
          type="text"
          aria-label="命令行"
          defaultValue="3DORBIT"
          className="min-w-0 flex-1 bg-transparent font-['Liberation_Mono',monospace] text-[9px] text-black outline-none"
        />
      </div>
    </div>
  );
}

function Viewport() {
  return (
    <main className="relative min-h-0 flex-1 overflow-hidden bg-black shadow-[inset_1px_0_0_#26364f]">
      <p className="px-0.5 pt-[3px] text-[8px] leading-[11px] text-[#d8d8d8]">[−][右视][线框]</p>
      <div className="absolute top-[5px] right-1 flex gap-[5px]">
        {["M1 6h7", "M1 3h5v5H1zM3 3V1h5v5H6", "M1 1l6 7M7 1L1 8"].map((d, i) => (
          <button key={d} type="button" aria-label={["最小化", "还原", "关闭"][i]}>
            <svg viewBox="0 0 9 9" className="block size-2" fill="none"><path d={d} stroke="#e6e6e6" strokeWidth={i === 1 ? 1.3 : 2.2} /></svg>
          </button>
        ))}
      </div>
      <Model />
      <ViewCube />
      <NavBar />
      <aside className="absolute bottom-10 left-0 h-[106px] w-[200px] bg-[#84c1ff] pt-2.5 pl-[15px] text-[16px] leading-7 font-medium text-white">
        <p className="pl-3">小提示：</p>
        <p>把二维线框改为真实</p>
      </aside>
      <CommandLine />
    </main>
  );
}

function LayoutTabs() {
  return (
    <footer className="flex h-5 items-start bg-[#3a3a3a] pl-[7px] text-[#a3a3a3]">
      <button type="button" className="h-3.5 w-[34px] bg-[#6d6d6d] font-bold text-white [clip-path:polygon(0_0,100%_0,29px_100%,5px_100%)]">模型</button>
      <button type="button" className="h-3.5 w-[37px] bg-[#515151] [clip-path:polygon(0_0,100%_0,32px_100%,5px_100%)]">布局1</button>
      <button type="button" className="h-3.5 w-[37px] bg-[#515151] [clip-path:polygon(0_0,100%_0,32px_100%,5px_100%)]">布局2</button>
      <button type="button" aria-label="新布局" className="flex h-3.5 w-[17px] items-center justify-center bg-[#515151] [clip-path:polygon(0_0,100%_0,14px_100%,3px_100%)]">
        <svg viewBox="0 0 7 7" className="size-1.5"><path d="M3.500 0v7M0 3.500h7" stroke="#ddd" strokeWidth="1.200" /></svg>
      </button>
    </footer>
  );
}

function VideoMark() {
  return (
    <svg viewBox="0 0 156 42" className="pointer-events-none absolute top-[30px] left-8 h-[42px] w-[156px] overflow-visible" aria-label="秒dong视频">
      <g
        fill="#fff"
        stroke="#262626"
        strokeWidth="4"
        strokeLinejoin="round"
        paintOrder="stroke"
        fontStyle="italic"
        fontFamily="Noto Sans CJK SC, sans-serif"
        fontWeight="500"
      >
        <text x="3" y="29" fontSize="30">秒</text>
        <text x="35" y="29" fontSize="30" fontFamily="Open Sans, sans-serif">d</text>
        <text x="63" y="29" fontSize="28" fontFamily="Open Sans, sans-serif">ng</text>
        <text x="95" y="28" fontSize="28">视频</text>
      </g>
      <circle cx="57" cy="21" r="8" fill="#2f8fe8" stroke="#262626" strokeWidth="1" />
      <path d="M54 17l8 4-8 5z" fill="#fff" />
      <path d="M57 6l3 4 5-4" fill="none" stroke="#f7cf2e" strokeWidth="2.500" />
    </svg>
  );
}

function SiteMark() {
  return (
    <div className="absolute right-0 bottom-0 flex h-[116px] w-[233px] items-center bg-white pl-5 shadow-[-3px_0_0_#1d2b52]">
      <svg viewBox="0 0 62 50" className="h-[50px] w-[62px] shrink-0" aria-hidden="true">
        <path d="M19 14l11-6v32H19z" fill="#2455a8" />
        <path d="M31 8l12 4v28H31z" fill="#e1e5ea" />
        <path d="M5 28l10-4v16H9z" fill="#1c4796" />
        <path d="M36 23l7-3 3 1v18H36z" fill="#2455a8" />
        <path d="M47 21l6 2v9l-6 5z" fill="#d5dce5" />
        <path d="M5 20C12 4 36-3 52 4c10 5 10 15 5 22C60 16 56 8 45 6 30 3 13 9 5 20z" fill="#93c52b" />
        <path d="M4 24C0 34 6 42 22 41c14-1 26-7 36-17C52 38 38 47 22 49 4 50-3 38 4 24z" fill="#17408f" />
      </svg>
      <div className="flex flex-col pl-0.5 whitespace-nowrap text-black">
        <strong className="text-[26px] leading-[26px] font-black italic">土木工程网</strong>
        <a href="#civilcn" className="font-['Noto_Sans','Open_Sans',sans-serif] text-[17px] leading-[16px] font-medium italic">
          www.civilcn.com
        </a>
      </div>
    </div>
  );
}

export default function App() {
  return (
    <div className="relative flex h-screen flex-col overflow-hidden bg-[#393939] font-['Noto_Sans_CJK_SC',sans-serif] text-[8px] leading-3 text-[#dedede]">
      <header className="flex">
        <button type="button" aria-label="应用程序菜单" className="z-10 -mb-0.5 flex h-[27px] w-[27px] shrink-0 items-center border border-[#3c3c3c] bg-gradient-to-b from-[#8b8b8b] to-[#606060]">
          <svg viewBox="0 0 20 22" className="h-[22px] w-5">
            <path d="M8 1h5l6 18-5 1-1-5H7l-2 4-5 1z" fill="#cf2b2b" />
            <path d="M8 11h4l-1-6z" fill="#7a6a6a" />
            <path d="M0 20L8 1h2L5 19z" fill="#e8534b" />
          </svg>
          <Caret className="w-1" />
        </button>
        <div className="min-w-0 flex-1">
          <TitleBar />
          <MenuTabs />
        </div>
      </header>
      <Ribbon />
      <DrawingTabs />
      <Viewport />
      <LayoutTabs />
      <VideoMark />
      <SiteMark />
    </div>
  );
}
